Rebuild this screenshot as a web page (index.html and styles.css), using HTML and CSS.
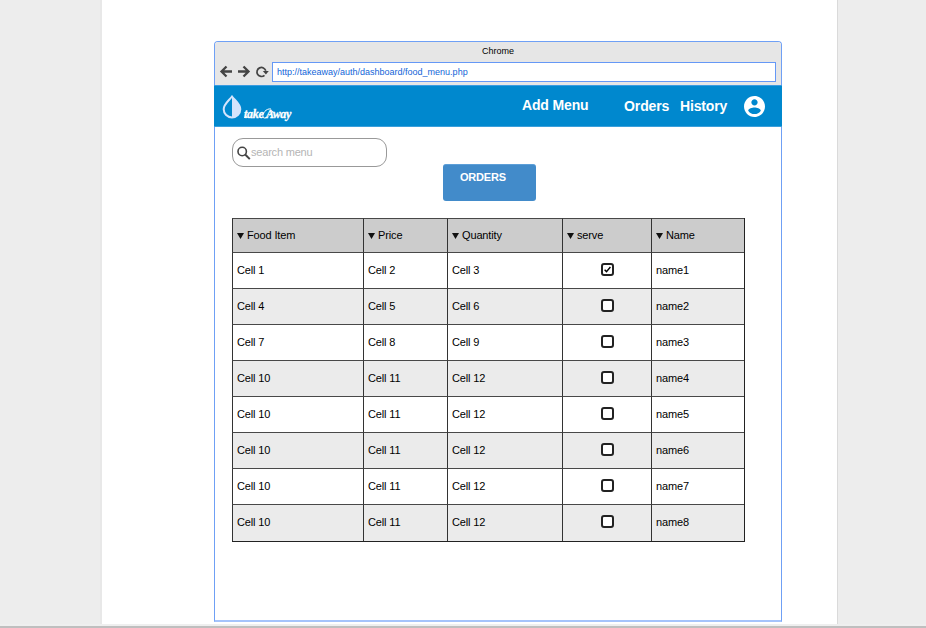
FILE: index.html
```html
<!DOCTYPE html>
<html lang="en">
<head>
<meta charset="utf-8">
<title>Food menu</title>
<link rel="stylesheet" href="styles.css">
</head>
<body>
<main class="sheet">
  <section class="window">
    <header class="chrome">
      <div class="title">Chrome</div>
      <div class="toolbar">
        <svg class="tools" width="50" height="14" viewBox="0 0 50 14" fill="none" stroke="#444" stroke-width="2.300">
          <path d="M13 6.500H3M7.500 1.500l-5 5 5 5M19 6.500h10M24.500 1.500l5 5-5 5"/>
          <path d="M45.500 10.300A4.500 4.500 0 1 1 46.800 5.800" stroke-width="1.700"/>
          <path d="M43.800 6h6l-2.900 3.500z" fill="#444" stroke="none"/>
        </svg>
        <div class="address">http://takeaway/auth/dashboard/food_menu.php</div>
      </div>
    </header>
    <nav class="nav">
      <svg class="drop" width="20" height="24" viewBox="0 0 20 24">
        <path d="M10 1.500C6.500 6 1.700 9.300 1.700 14.200a8.300 8.300 0 0 0 16.600 0C18.300 9.300 13.500 6 10 1.500z" fill="none" stroke="#d4e4fc" stroke-width="2"/>
        <path d="M10 1.500C13.500 6 18.300 9.300 18.300 14.200a8.300 8.300 0 0 1-8.300 8.300z" fill="#d4e4fc"/>
      </svg>
      <div class="brand"><span class="take">take</span><span class="away">Away</span>
        <svg class="swash" width="54" height="16" viewBox="0 0 54 16" fill="none" stroke="#fff" stroke-width="1"><path d="M27 3c-5-1-9 5-8 8 1 3 7-1 10-6M0 11.500l3-1"/></svg>
      </div>
      <a class="link add">Add Menu</a>
      <a class="link orders">Orders</a>
      <a class="link history">History</a>
      <svg class="user" width="21" height="21" viewBox="2 2 20 20" fill="#fff"><path d="M12 2C6.480 2 2 6.480 2 12s4.480 10 10 10 10-4.480 10-10S17.520 2 12 2zm0 3c1.660 0 3 1.340 3 3s-1.340 3-3 3-3-1.340-3-3 1.340-3 3-3zm0 14.200c-2.500 0-4.710-1.280-6-3.220.030-1.990 4-3.080 6-3.080 1.990 0 5.970 1.090 6 3.080-1.290 1.940-3.500 3.220-6 3.220z"/></svg>
    </nav>
    <div class="content">
      <div class="search">
        <svg width="14" height="14" viewBox="0 0 14 14" fill="none" stroke="#444"><circle cx="5.200" cy="5.500" r="4.200" stroke-width="1.600"/><path d="M8.200 8.500l4.600 4.600" stroke-width="2"/></svg>
        <span>search menu</span>
      </div>
      <div class="button">ORDERS</div>
      <div class="table">
        <div class="row head"><div><i></i>Food Item</div><div><i></i>Price</div><div><i></i>Quantity</div><div><i></i>serve</div><div><i></i>Name</div></div>
        <div class="row"><div>Cell 1</div><div>Cell 2</div><div>Cell 3</div><div class="serve"><b class="box"><svg width="9" height="9" viewBox="0 0 9 9" fill="none" stroke="#000" stroke-width="1.400"><path d="M1.600 4.700l1.900 1.900L7.400 2"/></svg></b></div><div>name1</div></div>
        <div class="row alt"><div>Cell 4</div><div>Cell 5</div><div>Cell 6</div><div class="serve"><b class="box"></b></div><div>name2</div></div>
        <div class="row"><div>Cell 7</div><div>Cell 8</div><div>Cell 9</div><div class="serve"><b class="box"></b></div><div>name3</div></div>
        <div class="row alt"><div>Cell 10</div><div>Cell 11</div><div>Cell 12</div><div class="serve"><b class="box"></b></div><div>name4</div></div>
        <div class="row"><div>Cell 10</div><div>Cell 11</div><div>Cell 12</div><div class="serve"><b class="box"></b></div><div>name5</div></div>
        <div class="row alt"><div>Cell 10</div><div>Cell 11</div><div>Cell 12</div><div class="serve"><b class="box"></b></div><div>name6</div></div>
        <div class="row"><div>Cell 10</div><div>Cell 11</div><div>Cell 12</div><div class="serve"><b class="box"></b></div><div>name7</div></div>
        <div class="row alt last"><div>Cell 10</div><div>Cell 11</div><div>Cell 12</div><div class="serve"><b class="box"></b></div><div>name8</div></div>
      </div>
    </div>
  </section>
</main>
<footer class="scrollbar"></footer>
</body>
</html>
```
FILE: styles.css
```css
* { box-sizing: border-box; }
body { margin: 0; height: 628px; overflow: hidden; background: #ededed; font-family: "Liberation Sans", Arial, sans-serif; color: #000; }
.sheet { width: 738px; height: 624px; margin-left: 100px; padding: 41px 0 0 112px; background: #fff; border-left: 2px solid #e8e8e8; border-right: 1px solid #dadada; }
.scrollbar { height: 4px; border-top: 2px solid #efefef; background: #bfbfbf; }
.window { width: 568px; height: 581px; border: 1px solid #6fa0f5; border-bottom: 2px solid #a5c3fb; border-radius: 4px 4px 0 0; background: #fff; }
.chrome { height: 43px; background: #e6e6e6; border-radius: 3px 3px 0 0; }
.title { height: 20px; padding-top: 3px; font-size: 9px; line-height: 12px; text-align: center; }
.toolbar { display: flex; align-items: flex-start; }
.tools { margin: 3px 0 0 4px; }
.address { width: 504px; height: 20px; margin-left: 3px; padding-left: 4px; border: 1px solid #6598f6; background: #fff; color: #1265d8; font-size: 9px; line-height: 18px; white-space: nowrap; }
.nav { display: flex; align-items: flex-start; width: 568px; height: 42px; margin-left: -1px; background: #0088ce; border-top: 1px solid #3a9be0; border-bottom: 1px solid #3a9fdb; color: #fff; }
.drop { margin: 9px 0 0 8px; flex: none; }
.brand { position: relative; width: 54px; height: 16px; margin: 20px 0 0 2px; font: italic bold 12px/16px "Liberation Serif", serif; white-space: nowrap; -webkit-text-stroke: .3px #fff; }
.take { display: inline-block; width: 22px; letter-spacing: -.3px; }
.away { letter-spacing: -.4px; }
.swash { position: absolute; left: 0; top: 0; }
.link { font-size: 14px; line-height: 16px; font-weight: bold; white-space: nowrap; letter-spacing: -.15px; }
.add { width: 102px; margin: 11px 0 0 224px; }
.orders { width: 56px; margin-top: 12px; letter-spacing: -.1px; }
.history { width: 64px; margin-top: 12px; }
.user { margin-top: 10px; flex: none; }
.content { padding: 11px 0 0 17px; }
.search { display: flex; align-items: center; width: 155px; height: 29px; padding-left: 4px; border: 1px solid #999; border-radius: 11px; color: #b5b5b5; font-size: 11px; }
.search span { padding-bottom: 2px; letter-spacing: -.2px; }
.button { width: 93px; height: 37px; margin: -3px 0 17px 211px; padding: 6px 0 0 17px; border-radius: 3px; background: #428bca; border-top: 1px solid #5d9fd8; color: #fff; font-size: 11px; line-height: 12px; font-weight: bold; letter-spacing: -.2px; }
.table { width: 513px; border-bottom: 1px solid #222; border-right: 1px solid #222; }
.row { display: grid; grid-template-columns: 131px 84px 115px 89px 93px; height: 36px; }
.row > div { display: flex; align-items: center; padding: 0 0 2px 4px; border-top: 1px solid #484848; border-left: 1px solid #333; font-size: 11px; line-height: 12px; letter-spacing: -.14px; white-space: nowrap; }
.head { height: 34px; background: #ccc; }
.alt { background: #ebebeb; }
.last { height: 37px; }
.row.last > div { padding-bottom: 3px; }
.head i { width: 7px; height: 6px; margin: 3px 3px 0 0; background: #111; clip-path: polygon(0 0, 100% 0, 50% 100%); }
.row > .serve { align-items: flex-start; padding: 10px 0 0 38px; }
.row.head > div { padding: 0 0 2px 4px; align-items: center; }
.box { display: flex; width: 13px; height: 13px; align-items: center; justify-content: center; border: 1.500px solid #222; border-width: 2px; border-radius: 3px; background: #fff; }
.box svg { flex: none; }
```
